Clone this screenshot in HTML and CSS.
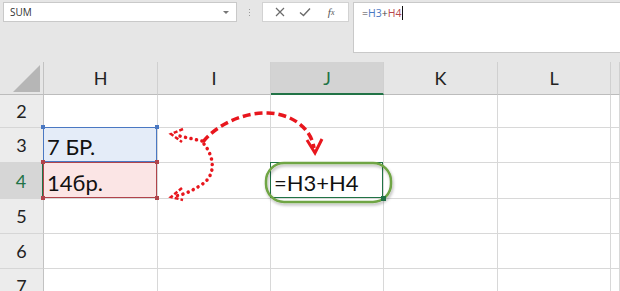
FILE: index.html
```html
<!DOCTYPE html>
<html lang="ru">
<head>
    <meta charset="UTF-8">
    <meta name="viewport" content="width=device-width, initial-scale=1.0">
    <title>Формула =H3+H4</title>
    <link rel="stylesheet" href="styles.css">
</head>
<body>
    <div class="toolbar">
        <div class="namebox">
            <span>SUM</span>
            <span class="caret"></span>
        </div>
        <div class="grip"><i></i><i></i><i></i></div>
        <div class="fx-buttons">
            <span class="btn">
                <svg width="10" height="10" viewBox="0 0 10 10"><path d="M1 1 L9 9 M9 1 L1 9" stroke="#6b6b6b" stroke-width="1.2" fill="none"/></svg>
            </span>
            <span class="btn">
                <svg width="12" height="10" viewBox="0 0 12 10"><path d="M1 5.5 L4.5 8.5 L11 1.5" stroke="#6b6b6b" stroke-width="1.4" fill="none"/></svg>
            </span>
            <span class="btn fx"><i>f</i><sub>x</sub></span>
        </div>
        <div class="formula">
            <span class="op">=</span><span class="ref-blue">H3</span><span class="op">+</span><span class="ref-red">H4</span><span class="cursor"></span>
        </div>
    </div>

    <div class="sheet">
        <!-- column headers -->
        <div class="head corner"><span class="triangle"></span></div>
        <div class="head col">H</div>
        <div class="head col">I</div>
        <div class="head col selected">J</div>
        <div class="head col">K</div>
        <div class="head col">L</div>
        <div class="head col"></div>

        <!-- row 2 -->
        <div class="head row">2</div>
        <div class="cell"></div><div class="cell"></div><div class="cell"></div><div class="cell"></div><div class="cell"></div><div class="cell"></div>

        <!-- row 3 -->
        <div class="head row">3</div>
        <div class="cell range blue">7 БР.</div>
        <div class="cell"></div><div class="cell"></div><div class="cell"></div><div class="cell"></div><div class="cell"></div>

        <!-- row 4 -->
        <div class="head row selected">4</div>
        <div class="cell range red">14бр.</div>
        <div class="cell"></div>
        <div class="cell active">=H3+H4</div>
        <div class="cell"></div><div class="cell"></div><div class="cell"></div>

        <!-- row 5 -->
        <div class="head row">5</div>
        <div class="cell"></div><div class="cell"></div><div class="cell"></div><div class="cell"></div><div class="cell"></div><div class="cell"></div>

        <!-- row 6 -->
        <div class="head row">6</div>
        <div class="cell"></div><div class="cell"></div><div class="cell"></div><div class="cell"></div><div class="cell"></div><div class="cell"></div>

        <!-- row 7 -->
        <div class="head row">7</div>
        <div class="cell"></div><div class="cell"></div><div class="cell"></div><div class="cell"></div><div class="cell"></div><div class="cell"></div>
    </div>

    <!-- Annotation: arrows and highlight -->
    <svg class="notes" width="620" height="291" viewBox="0 0 620 291">
        <defs>
            <filter id="shadow" x="-10%" y="-30%" width="120%" height="160%">
                <feDropShadow dx="1" dy="2" stdDeviation="1.5" flood-color="#000" flood-opacity="0.3"/>
            </filter>
        </defs>
        <g fill="none" stroke="#e8161d" stroke-width="3.5">
            <path d="M203 142 C216 125 244 112 268 113 C292 114 311 128 314 148" stroke-dasharray="8 4"/>
            <path d="M307 140 L315 153 L322 139" stroke-width="3"/>
            <path d="M202 141 L175 135" stroke-dasharray="0.1 5.5" stroke-linecap="round"/>
            <path d="M183 129 L171 134 L182 142" stroke-width="2.5" stroke-dasharray="4 2"/>
            <path d="M204 144 C215 158 216 176 201 185 C192 191 183 195 175 196" stroke-dasharray="0.1 5.5" stroke-linecap="round"/>
            <path d="M182 188 L171 197 L183 200" stroke-width="2.5" stroke-dasharray="4 2"/>
        </g>
        <rect x="266" y="163" width="125" height="39" rx="18" fill="none" stroke="#6fa544" stroke-width="2.5" filter="url(#shadow)"/>
    </svg>
</body>
</html>
```

FILE: styles.css
```css
body { margin: 0; width: 620px; height: 291px; overflow: hidden; position: relative; background: #e6e6e6; font-family: "Open Sans", "Noto Sans", sans-serif; }

/* Formula bar */
.toolbar { display: flex; align-items: flex-start; height: 62px; padding: 2px 0 0 3px; box-sizing: border-box; }
.namebox { display: flex; align-items: center; justify-content: space-between; width: 234px; height: 20px; padding: 0 7px 0 6px; box-sizing: border-box; background: #fff; border: 1px solid #c9c9c9; font-size: 10px; color: #333; }
.caret { width: 0; height: 0; border-left: 3px solid transparent; border-right: 3px solid transparent; border-top: 3px solid #777; }
.grip { width: 25px; height: 20px; display: flex; flex-direction: column; align-items: center; justify-content: center; gap: 2px; }
.grip i { width: 1px; height: 1px; background: #9a9a9a; }
.fx-buttons { display: flex; align-items: center; justify-content: space-around; width: 87px; height: 20px; padding: 0 4px; box-sizing: border-box; background: #fff; border: 1px solid #d2d2d2; }
.btn { display: flex; align-items: center; justify-content: center; width: 22px; height: 18px; }
.fx { font-family: "Liberation Serif", serif; font-size: 11px; color: #555; }
.fx sub { font-size: 8px; font-style: italic; vertical-align: -1px; }
.formula { flex: 1; height: 51px; margin-left: 4px; padding: 3px 0 0 8px; box-sizing: border-box; background: #fff; border: 1px solid #c9c9c9; border-right: none; font-size: 10.5px; line-height: 14px; display: flex; align-items: flex-start; }
.op { color: #444; }
.ref-blue { color: #4a78c2; }
.ref-red { color: #b8474e; }
.cursor { width: 1px; height: 14px; background: #111; }

/* Sheet grid */
.sheet { display: grid; grid-template-columns: 44px 114px 113px 113px 114px 113px 1fr; grid-template-rows: 33px 33px 35px 36px 35px 35px 35px; background: #fff; font-family: Lato, "Liberation Sans", sans-serif; }
.cell { position: relative; display: flex; align-items: center; padding: 3px 0 0 3px; box-sizing: border-box; border-right: 1px solid #d8d8d8; border-bottom: 1px solid #d8d8d8; font-size: 22px; color: #111; white-space: nowrap; }
.head { display: flex; align-items: center; justify-content: center; box-sizing: border-box; background: #e6e6e6; color: #222; font-size: 18px; }
.head.col { border-right: 1px solid #d0d0d0; border-bottom: 1px solid #bcbcbc; }
.head.row { background: #ececec; border-right: 1px solid #c2c2c2; border-bottom: 1px solid #d6d6d6; }
.head.col.selected { background: #d3d3d3; color: #217346; border-bottom: 2px solid #217346; }
.head.row.selected { background: #d6d6d6; color: #217346; border-right: 2px solid #217346; }
.corner { align-items: flex-end; justify-content: flex-end; padding: 0 3px 2px 0; border-right: 1px solid #c2c2c2; border-bottom: 1px solid #bcbcbc; }
.triangle { width: 27px; height: 27px; background: #b6b6b6; clip-path: polygon(100% 0, 100% 100%, 0 100%); }

/* Formula reference ranges */
.range::after { content: ""; position: absolute; inset: -1px 0 0 -1px; border: 1px solid var(--edge); }
.range::before { content: ""; position: absolute; inset: -3px -2px -2px -3px; z-index: 1;
    background:
        linear-gradient(var(--edge), var(--edge)) left top / 4px 4px no-repeat,
        linear-gradient(var(--edge), var(--edge)) right top / 4px 4px no-repeat,
        linear-gradient(var(--edge), var(--edge)) left bottom / 4px 4px no-repeat,
        linear-gradient(var(--edge), var(--edge)) right bottom / 4px 4px no-repeat; }
.blue { --edge: #4a78c2; background: #e4ecf8; }
.red { --edge: #b0444b; background: #fbe5e5; }

.active::after { content: ""; position: absolute; inset: -1px 0 0 -1px; border: 1px solid #217346; }
.active::before { content: ""; position: absolute; right: -3px; bottom: -3px; width: 5px; height: 5px; background: #217346; z-index: 1; }

.notes { position: absolute; left: 0; top: 0; pointer-events: none; }
```
